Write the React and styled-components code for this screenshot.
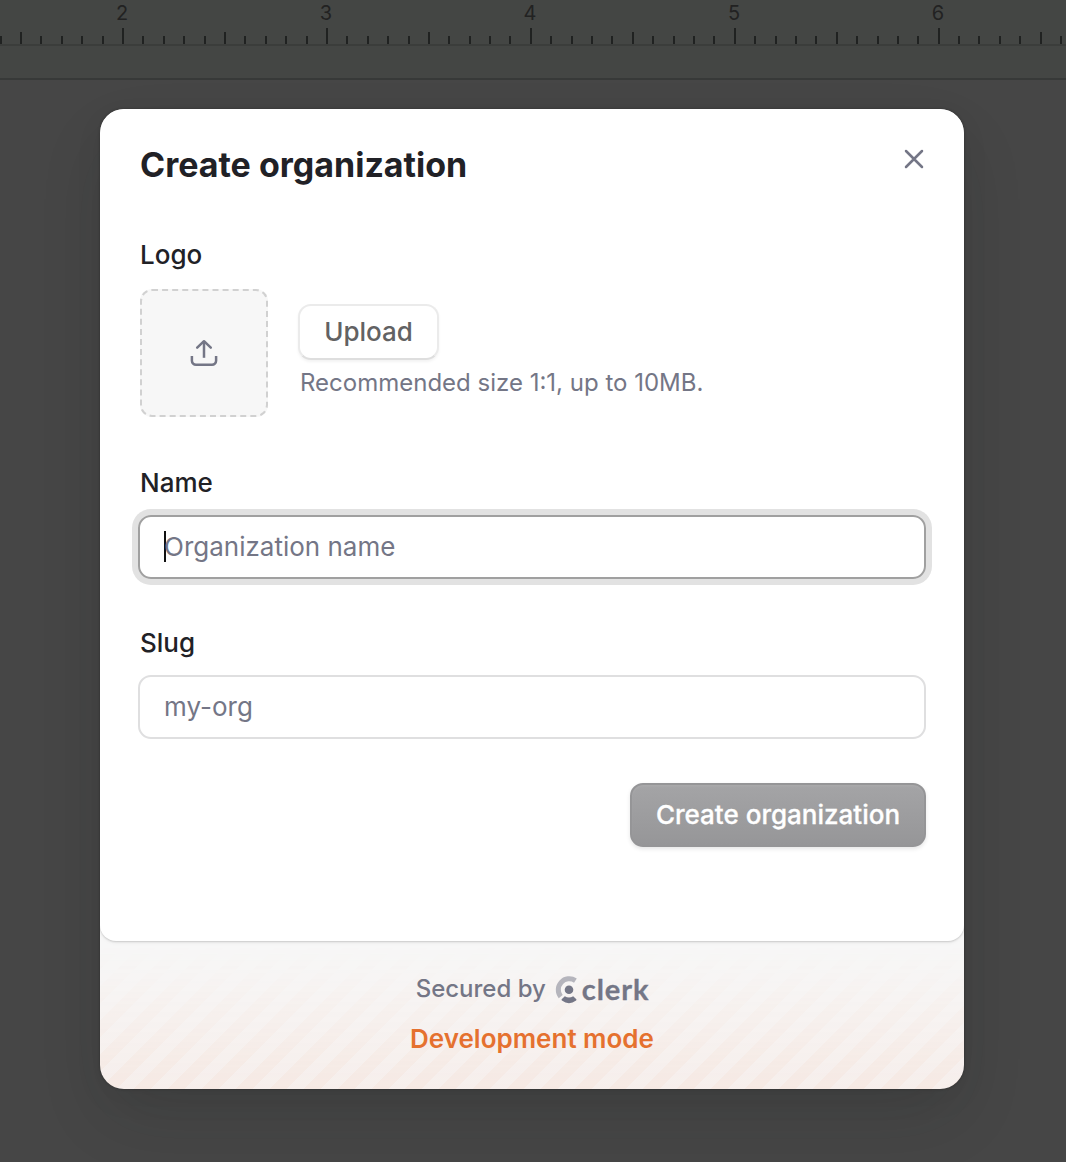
import React from "react";
import styled, { createGlobalStyle, css } from "styled-components";

const INCH = 204;
const STEP = INCH / 10;

const GlobalStyle = createGlobalStyle`
  * { box-sizing: border-box; }
  body {
    margin: 0;
    background: #464646;
    font-family: Inter, "Liberation Sans", sans-serif;
    -webkit-font-smoothing: antialiased;
  }
  button, input { font-family: inherit; margin: 0; }
`;

const Page = styled.div`
  width: 1066px;
  height: 1162px;
  overflow: hidden;
  background: #464646;
  display: flex;
  flex-direction: column;
`;

const Ruler = styled.header`
  flex: none;
  height: 46px;
  overflow: hidden;
  background: #444644;
  border-bottom: 2px solid #3b3d3b;
`;

const Numbers = styled.div`
  display: flex;
  height: 28px;
  padding-left: 20px;
`;

const Numeral = styled.span`
  flex: none;
  width: ${INCH}px;
  text-align: center;
  font-size: 20px;
  line-height: 26px;
  color: #222222;
`;

const Ticks = styled.div`
  display: flex;
  align-items: flex-end;
  height: 16px;
  margin-left: -0.3px;
`;

const Tick = styled.i`
  flex: none;
  width: ${STEP}px;
  height: ${(p) => p.$size}px;
  border-left: 2px solid #202221;
`;

const SubBar = styled.div`
  flex: none;
  height: 34px;
  background: #444644;
  border-bottom: 2px solid #373938;
`;

const Modal = styled.section`
  flex: none;
  width: 864px;
  height: 980px;
  margin: 29px 0 0 100px;
  display: flex;
  flex-direction: column;
  border-radius: 24px;
  background: #f7f7f7;
  overflow: hidden;
  box-shadow: 0 30px 70px -10px rgba(25, 32, 28, 0.16), 0 10px 30px rgba(0, 0, 0, 0.05),
    0 0 3px rgba(0, 0, 0, 0.3);
`;

const Card = styled.div`
  position: relative;
  flex: none;
  height: 832px;
  padding: 32px 38px 0;
  background: #ffffff;
  border-radius: 24px 24px 16px 16px;
  box-shadow: 0 1px 2px rgba(0, 0, 0, 0.16), 0 2px 4px rgba(0, 0, 0, 0.04);
`;

const CardHeader = styled.div`
  display: flex;
  justify-content: space-between;
  height: 92px;
  padding-left: 2px;
`;

const Title = styled.h1`
  margin: 0;
  font-size: 34px;
  line-height: 48px;
  font-weight: 700;
  color: #212126;
`;

const CloseButton = styled.button`
  width: 24px;
  height: 24px;
  margin-top: 6px;
  padding: 0;
  border: 0;
  background: none;
  color: #747686;
  svg { display: block; }
`;

const Label = styled.label`
  display: block;
  padding-left: 2px;
  font-size: 26px;
  line-height: 44px;
  font-weight: 500;
  color: #212126;
`;

const LogoRow = styled.div`
  display: flex;
  gap: 30px;
  height: 184px;
  padding: 12px 0 0 2px;
`;

const DropZone = styled.div`
  flex: none;
  width: 128px;
  height: 128px;
  display: grid;
  place-items: center;
  border: 2px dashed #d1d1d1;
  border-radius: 12px;
  background: #f7f7f7;
  color: #747686;
  svg { display: block; }
`;

const UploadColumn = styled.div`
  display: flex;
  flex-direction: column;
  align-items: flex-start;
  padding-top: 15px;
`;

const UploadButton = styled.button`
  width: 141px;
  height: 56px;
  padding: 0 0 1px;
  border: 2px solid #ebebeb;
  border-bottom-color: #dedede;
  border-radius: 13px;
  background: #ffffff;
  box-shadow: 0 2px 3px rgba(0, 0, 0, 0.05);
  font-size: 26px;
  font-weight: 500;
  color: #626263;
`;

const Hint = styled.p`
  margin: 7px 0 0 2px;
  font-size: 24px;
  line-height: 32px;
  color: #747686;
  white-space: nowrap;
`;

const Field = styled.div`
  height: 160px;
`;

const Input = styled.div`
  display: flex;
  align-items: center;
  height: 64px;
  margin-top: 10px;
  padding: 0 24px 1px;
  border: 2px solid #dfdfe0;
  border-radius: 13px;
  font-size: 26px;
  color: #747686;
  ${(p) =>
    p.$focused &&
    css`
      border-color: #a0a0a0;
      box-shadow: 0 0 0 6px #e2e2e2;
    `}
`;

const Caret = styled.span`
  width: 2px;
  height: 31px;
  margin-right: -2px;
  background: #111111;
`;

const Actions = styled.div`
  display: flex;
  justify-content: flex-end;
  padding-top: 2px;
`;

const SubmitButton = styled.button`
  width: 296px;
  height: 64px;
  padding: 0 0 1px;
  border: 2px solid #959597;
  border-radius: 13px;
  background: linear-gradient(#a4a4a6, #969698);
  box-shadow: 0 2px 4px rgba(0, 0, 0, 0.1), inset 0 2px 2px rgba(255, 255, 255, 0.06);
  font-size: 26px;
  font-weight: 500;
  -webkit-text-stroke: 0.3px #ffffff;
  color: #ffffff;
`;

const Footer = styled.footer`
  flex: 1;
  margin-top: -16px;
  padding-top: 48px;
  display: flex;
  flex-direction: column;
  align-items: center;
  isolation: isolate;
  position: relative;
  z-index: 0;
  &::before {
    content: "";
    position: absolute;
    inset: 0 -1px 0 0;
    z-index: -1;
    background: repeating-linear-gradient(
      -45deg,
      rgba(240, 100, 35, 0.09) 0 12px,
      rgba(240, 100, 45, 0.055) 12px 24px
    );
    mask-image: linear-gradient(transparent 12%, black);
  }
`;

const Layer = styled.div`
  position: relative;
  z-index: 1;
`;

const Secured = styled.div`
  display: flex;
  align-items: center;
  gap: 9px;
  height: 32px;
  font-size: 24px;
  line-height: 30px;
  font-weight: 500;
  color: #747686;
`;

const SecuredText = styled.span`
  padding-bottom: 1px;
`;

const Brand = styled.span`
  display: flex;
  align-items: center;
  gap: 2px;
  font-family: Lato, Inter, sans-serif;
  font-size: 29px;
  line-height: 32px;
  font-weight: 700;
  letter-spacing: 0.9px;
  margin-right: -1px;
  -webkit-text-stroke: 0.3px currentColor;
  svg { display: block; flex: none; margin-top: 1px; }
`;

const DevMode = styled.p`
  margin: 18px 0 0;
  font-size: 26px;
  line-height: 32px;
  font-weight: 600;
  color: #e5712f;
`;

function ClerkMark() {
  return (
    <svg width="25" height="30" viewBox="0 0 25 30" fill="none">
      <path d="M20.4 5.6A11 11 0 0 0 5.7 21.6" stroke="currentColor" strokeOpacity="0.5" strokeWidth="5" />
      <circle cx="14" cy="14.8" r="4.3" fill="currentColor" />
      <path d="M6.7 24.3 9.8 21.3Q14 23.7 18.2 21.3L21.3 24.3Q21.7 24.9 21.1 25.5Q14 30.8 6.9 25.5Q6.3 24.9 6.7 24.3Z" fill="currentColor" />
    </svg>
  );
}

const numerals = [2, 3, 4, 5, 6];
const ticks = Array.from({ length: 53 }, (_, i) => {
  const tenth = (i + 4) % 10;
  return tenth === 0 ? 16 : tenth === 5 ? 12 : 8;
});

export default function App() {
  return (
    <Page>
      <GlobalStyle />
      <Ruler>
        <Numbers>
          {numerals.map((n) => (
            <Numeral key={n}>{n}</Numeral>
          ))}
        </Numbers>
        <Ticks>
          {ticks.map((size, i) => (
            <Tick key={i} $size={size} />
          ))}
        </Ticks>
      </Ruler>
      <SubBar />
      <Modal role="dialog">
        <Layer>
          <Card>
            <CardHeader>
              <Title>Create organization</Title>
              <CloseButton aria-label="Close">
                <svg width="24" height="24" viewBox="0 0 24 24" fill="none" stroke="currentColor" strokeWidth="2.5" strokeLinecap="round">
                  <path d="M4 4 20 20M20 4 4 20" />
                </svg>
              </CloseButton>
            </CardHeader>
            <Label>Logo</Label>
            <LogoRow>
              <DropZone>
                <svg width="32" height="32" viewBox="0 0 32 32" fill="none" stroke="currentColor" strokeWidth="2.5" strokeLinejoin="round">
                  <path d="M16 20.8V4.2" />
                  <path d="M9.2 10.6 16 4.2 22.8 10.6" strokeLinecap="round" />
                  <path d="M3.9 19V23.7A4.1 4.1 0 0 0 8 27.8H24A4.1 4.1 0 0 0 28.1 23.7V19" />
                </svg>
              </DropZone>
              <UploadColumn>
                <UploadButton>Upload</UploadButton>
                <Hint>Recommended size 1:1, up to 10MB.</Hint>
              </UploadColumn>
            </LogoRow>
            <Field>
              <Label>Name</Label>
              <Input $focused>
                <Caret />
                Organization name
              </Input>
            </Field>
            <Field>
              <Label>Slug</Label>
              <Input>my-org</Input>
            </Field>
            <Actions>
              <SubmitButton>Create organization</SubmitButton>
            </Actions>
          </Card>
        </Layer>
        <Footer>
          <Secured>
            <SecuredText>Secured by</SecuredText>
            <Brand>
              <ClerkMark />
              clerk
            </Brand>
          </Secured>
          <DevMode>Development mode</DevMode>
        </Footer>
      </Modal>
    </Page>
  );
}
